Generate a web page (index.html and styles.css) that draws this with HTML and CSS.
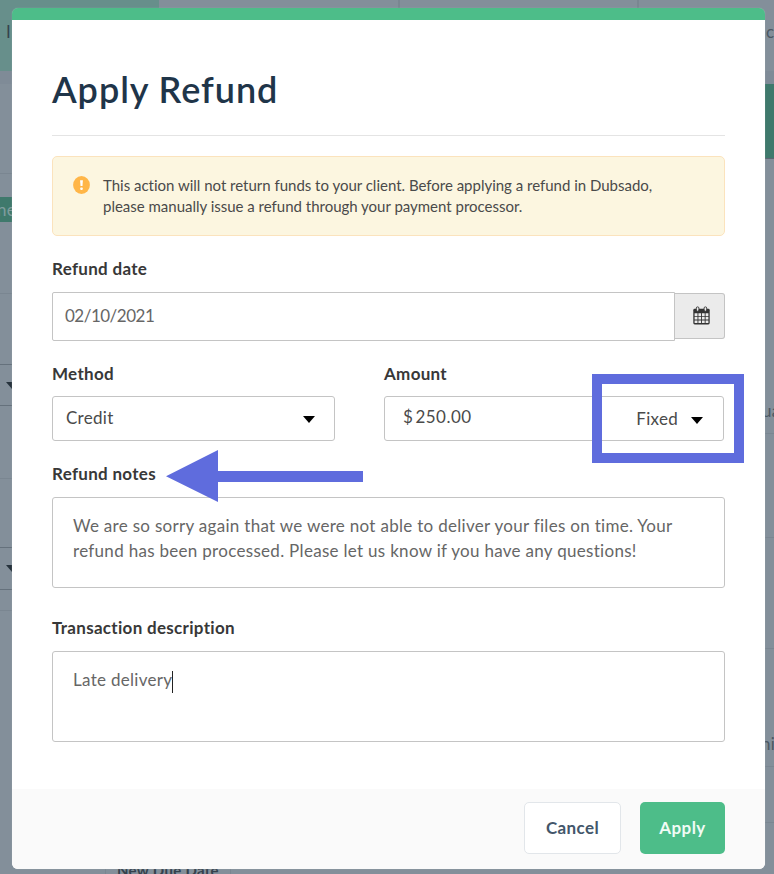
FILE: index.html
```html
<!DOCTYPE html>
<html lang="en">
<head>
  <meta charset="UTF-8">
  <meta name="viewport" content="width=device-width, initial-scale=1.0">
  <title>Apply Refund</title>
  <link rel="stylesheet" href="styles.css">
</head>
<body>
  <!-- Page behind the modal -->
  <div class="page">
    <div class="tabs">
      <div class="tab active">I</div>
      <div class="tab"></div>
      <div class="tab"></div>
      <div class="tab last">c</div>
    </div>
    <div class="page-gap"></div>
    <div class="columns">
      <div class="rail">
        <div class="row r1"></div>
        <div class="row r2"><span class="tag">ne</span></div>
        <div class="row r3"></div>
        <div class="row dark r4"><i class="caret"></i></div>
        <div class="row r5"></div>
        <div class="row dark r6"></div>
        <div class="row dark r7"><i class="caret"></i></div>
        <div class="row r8"></div>
      </div>
      <div class="due">New Due Date</div>
      <div class="rail right">
        <div class="banner"></div>
        <div class="row q1">ua</div>
        <div class="row q2"></div>
        <div class="row q3"></div>
        <div class="row q4">ni</div>
        <div class="row q5"></div>
      </div>
    </div>
  </div>

  <div class="modal">
    <div class="modal-body">
      <h1>Apply Refund</h1>

      <div class="alert">
        <svg class="alert-icon" width="17" height="18" viewBox="0 0 17 18">
          <ellipse cx="8.5" cy="9" rx="8.4" ry="9" fill="#ffb648"/>
          <path d="M7.100 4.300h2.800l-.4 5.800h-2z" fill="#fff"/>
          <rect x="7.200" y="11.400" width="2.600" height="2.500" rx=".8" fill="#fff"/>
        </svg>
        <p>This action will not return funds to your client. Before applying a refund in Dubsado,<br>please manually issue a refund through your payment processor.</p>
      </div>

      <label class="label-date">Refund date</label>
      <div class="date-group">
        <div class="input date">02/10/2021</div>
        <div class="addon">
          <svg width="17" height="19" viewBox="0 0 17 19">
            <rect x=".3" y="2.800" width="16.400" height="15.600" rx="1.400" fill="#333"/>
            <path d="M1.600 7.200h2.900v2.700H1.600zM5.400 7.200h2.700v2.700H5.400zM9 7.200h2.700v2.700H9zM12.600 7.200h2.800v2.700h-2.800zM1.600 10.800h2.900v2.700H1.600zM5.400 10.800h2.700v2.700H5.400zM9 10.800h2.700v2.700H9zM12.600 10.800h2.800v2.700h-2.800zM1.600 14.400h2.900v2.700H1.600zM5.400 14.400h2.700v2.700H5.400zM9 14.400h2.700v2.700H9zM12.600 14.400h2.800v2.700h-2.800z" fill="#ebebeb"/>
            <rect x="3.300" y=".9" width="2.600" height="4.300" rx="1.200" fill="#ebebeb" stroke="#333" stroke-width=".9"/>
            <rect x="11.100" y=".9" width="2.600" height="4.300" rx="1.200" fill="#ebebeb" stroke="#333" stroke-width=".9"/>
          </svg>
        </div>
      </div>

      <div class="two-col">
        <div class="col-method">
          <label>Method</label>
          <div class="input select"><span>Credit</span><i class="caret"></i></div>
        </div>
        <div class="col-amount">
          <label>Amount</label>
          <div class="input amount">
            <span class="value"><span class="dollar">$</span>250.00</span>
            <span class="unit">Fixed<i class="caret"></i></span>
          </div>
          <div class="highlight"></div>
        </div>
      </div>

      <label class="label-notes">Refund notes
        <svg class="arrow" width="198" height="52" viewBox="0 0 198 52">
          <path d="M0 26.300L52 0v21h145v11H52v20z" fill="#5f6cdd"/>
        </svg>
      </label>
      <div class="input textarea">We are so sorry again that we were not able to deliver your files on time. Your<br>refund has been processed. Please let us know if you have any questions!</div>

      <label class="label-desc">Transaction description</label>
      <div class="input textarea desc">Late delivery<span class="cursor"></span></div>
    </div>

    <div class="modal-footer">
      <button class="btn cancel">Cancel</button>
      <button class="btn apply">Apply</button>
    </div>
  </div>
</body>
</html>
```

FILE: styles.css
```css
* {
  box-sizing: border-box;
}

body {
  font-family: Lato, 'Liberation Sans', sans-serif;
  font-size: 17px;
  letter-spacing: 0.3px;
  color: #4a4a4a;
  background-color: #838f9a;
  margin: 0;
  height: 874px;
  overflow: hidden;
}

.page {
  height: 874px;
  color: #4c5863;
}

.tabs {
  display: grid;
  grid-template-columns: 159px 241px 239px 135px;
  height: 71px;
}

.tab {
  border-right: 2px solid #7a8691;
  line-height: 64px;
}

.tab.active {
  background-color: #678f8b;
  border-right: 0;
  padding-left: 6px;
  color: #35434e;
}

.tab.last {
  border-right: 0;
  padding-left: 127px;
  overflow: hidden;
}

.page-gap {
  height: 13px;
  background-color: #7f8b97;
}

.columns {
  display: flex;
  justify-content: space-between;
  height: 790px;
}

.rail {
  width: 12px;
  overflow: hidden;
}

.rail.right {
  width: 9px;
}

.row {
  border-bottom: 1px solid #7a8691;
  overflow: hidden;
}

.row.dark {
  border-bottom-color: #65717c;
}

.row .caret {
  display: block;
  margin: 17px 0 0 6px;
  border-top-color: #26323c;
}

.r1 { height: 90px; }
.r2 { height: 120px; padding-top: 23px; }
.r3 { height: 71px; border-bottom-color: #65717c; }
.r4 { height: 41px; }
.r5 { height: 73px; }
.r6 { height: 69px; }
.r7 { height: 42px; }
.r8 { height: 21px; }

.tag {
  display: block;
  height: 25px;
  line-height: 26px;
  background-color: #3f796c;
  color: #7f9d9e;
  text-indent: -3px;
}

.banner {
  height: 75px;
  background-color: #3f796c;
  border-bottom: 1px solid #5c6672;
}

.q1 { height: 275px; padding-top: 241px; text-indent: -3px; }
.q2 { height: 104px; }
.q3 { height: 111px; }
.q4 { height: 118px; padding-top: 84px; text-indent: -4px; }
.q5 { height: 56px; }

.due {
  align-self: flex-end;
  margin-right: 441px;
  width: 126px;
  border: solid #7a8691;
  border-width: 0 1px;
  height: 16px;
  padding-left: 11px;
  line-height: 24px;
  font-size: 15px;
  font-weight: bold;
  white-space: nowrap;
  color: #34414c;
}

.modal {
  position: absolute;
  left: 12px;
  top: 8px;
  width: 753px;
  height: 861px;
  border-top: 12px solid #4dbd89;
  border-radius: 6px;
  background-color: #fff;
  box-shadow: 0 0 1px rgba(190, 200, 208, 0.8);
  overflow: hidden;
  display: flex;
  flex-direction: column;
}

.modal-body {
  padding: 0 40px;
  flex: 1;
}

h1 {
  margin: 0 0 20px;
  height: 116px;
  padding-top: 47px;
  border-bottom: 1px solid #e4e4e4;
  font-size: 36px;
  line-height: 44px;
  font-weight: 600;
  letter-spacing: 0.95px;
  color: #1f3549;
}

.alert {
  display: flex;
  height: 80px;
  padding: 18px 20px;
  background-color: #fcf6e0;
  border: 1px solid #fbe3bd;
  border-radius: 5px;
  font-size: 15px;
  line-height: 21px;
  letter-spacing: -0.01px;
  white-space: nowrap;
}

.alert p {
  margin: 0 0 0 13px;
}

.alert-icon {
  margin-top: 1px;
  flex: none;
}

label {
  display: block;
  font-weight: bold;
  line-height: 22px;
  color: #383838;
}

.input {
  border: 1px solid #c4c4c4;
  border-radius: 3px;
  background-color: #fff;
}

.label-date {
  margin-top: 22px;
}

.date-group {
  display: flex;
  align-items: center;
  margin-top: 12px;
}

.date {
  width: 623px;
  height: 49px;
  line-height: 45px;
  padding-left: 12px;
  border-radius: 2px 0 0 2px;
  letter-spacing: -0.5px;
  color: #666;
}

.addon {
  width: 50px;
  height: 46px;
  display: flex;
  align-items: center;
  justify-content: center;
  padding-left: 3px;
  padding-bottom: 2px;
  margin-bottom: 1px;
  background-color: #ebebeb;
  border: 1px solid #c4c4c4;
  border-left: 0;
  border-radius: 0 3px 3px 0;
}

.two-col {
  display: grid;
  grid-template-columns: 283px 340px;
  column-gap: 49px;
  margin-top: 22px;
}

.col-amount {
  position: relative;
}

.select,
.amount {
  display: flex;
  justify-content: space-between;
  align-items: center;
  height: 45px;
  margin-top: 11px;
}

.select {
  padding: 0 19px 2px 13px;
}

.amount {
  padding: 0 20px 0 18px;
}

.value {
  padding-bottom: 4px;
  letter-spacing: 0.5px;
}

.dollar {
  margin-right: 2px;
}

.unit {
  display: flex;
  align-items: center;
}

.unit .caret {
  margin-left: 13px;
}

.caret {
  border: 6px solid transparent;
  border-top: 7px solid #000;
  border-bottom: 0;
  margin-top: 3px;
}

/* callout box over the fixed / percent dropdown */
.highlight {
  position: absolute;
  left: 208px;
  top: 11px;
  width: 152px;
  height: 89px;
  border: 10px solid #5f6cdd;
}

.label-notes {
  position: relative;
  margin-top: 22px;
}

.arrow {
  position: absolute;
  left: 114px;
  top: -13px;
}

.textarea {
  height: 91px;
  margin-top: 12px;
  padding: 15px 20px;
  line-height: 25px;
  color: #666;
  white-space: nowrap;
}

.label-desc {
  margin-top: 29px;
}

.desc {
  margin-top: 12px;
}

.cursor {
  display: inline-block;
  width: 1px;
  height: 22px;
  vertical-align: middle;
  background-color: #222;
}

.modal-footer {
  display: flex;
  justify-content: flex-end;
  gap: 19px;
  height: 80px;
  padding: 13px 40px 0;
  background-color: #fafafa;
}

.btn {
  height: 52px;
  font: bold 17px Lato, 'Liberation Sans', sans-serif;
  letter-spacing: 0.4px;
  border-radius: 5px;
  padding: 0 0 2px;
}

.cancel {
  width: 97px;
  background-color: #fff;
  border: 1px solid #e2e6ea;
  color: #43566a;
}

.apply {
  width: 85px;
  background-color: #4dbd89;
  border: 0;
  color: #f0fbf5;
}
```
